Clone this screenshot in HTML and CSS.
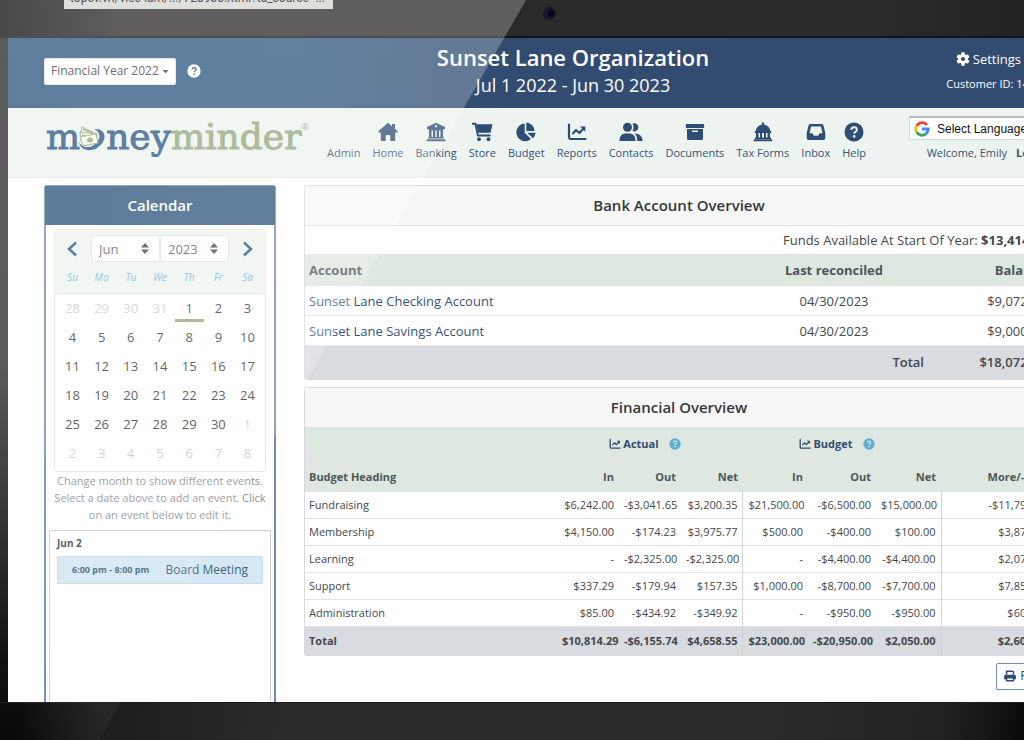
FILE: index.html
```html
<!DOCTYPE html>
<html lang="en">
<head>
<meta charset="utf-8">
<title>MoneyMinder - Sunset Lane Organization</title>
<link rel="stylesheet" href="styles.css">
</head>
<body>
<svg class="sprite" width="0" height="0" aria-hidden="true">
  <symbol id="i-help" viewBox="0 0 20 20"><circle cx="10" cy="10" r="9.5" fill="currentColor"/><path d="M7.2 7.9c.2-1.8 1.4-2.6 2.9-2.6 1.600 0 2.800 1 2.800 2.400 0 2-2.700 2-2.700 4" fill="none" stroke="var(--mark)" stroke-width="1.900"/><circle cx="10.200" cy="14.400" r="1.300" fill="var(--mark)"/></symbol>
  <symbol id="i-chart" viewBox="0 0 20 20"><path d="M2 2.500v12.500q0 2 2 2h14.500" fill="none" stroke="currentColor" stroke-width="2.200" stroke-linecap="round"/><path d="M5.500 12l3.500-4 3.500 3 4.500-5" fill="none" stroke="currentColor" stroke-width="2.100" stroke-linejoin="round"/><path d="M13 4.500h5.300v5.300z" fill="currentColor"/></symbol>
</svg>

<div class="bezel bezel-top"></div>
<div class="screen">
  <header class="topbar">
    <div class="year">
      <span class="pick pick-year"><select aria-label="Financial year"><option>Financial Year 2022</option></select></span>
      <button class="icon-btn" type="button" aria-label="Help with financial years"><svg width="14" height="14"><use href="#i-help"/></svg></button>
    </div>
    <div class="org">
      <h1>Sunset Lane Organization</h1>
      <p>Jul 1 2022 - Jun 30 2023</p>
    </div>
    <div class="account">
      <a class="settings" href="#"><svg width="14" height="14" viewBox="0 0 20 20"><g fill="currentColor"><rect x="7.500" y="0.500" width="5" height="19" rx="1.300"/><rect x="7.500" y="0.500" width="5" height="19" rx="1.300" transform="rotate(60 10 10)"/><rect x="7.500" y="0.500" width="5" height="19" rx="1.300" transform="rotate(120 10 10)"/></g><circle cx="10" cy="10" r="5" fill="none" stroke="currentColor" stroke-width="4"/><circle cx="10" cy="10" r="3" fill="#314c70"/></svg>Settings</a>
      <p>Customer ID: 149345</p>
    </div>
  </header>

  <div class="navbar">
    <a class="logo" href="#" aria-label="moneyminder"><span class="money">m<svg width="29" height="27" viewBox="0 0 29 27"><path d="M16 4C25 3 29 10 25 17 21 24 9 28 3 20c5 4 13 2 17-4 3-5 1-10-4-12z" fill="#2b5684"/><path d="M1 17c1 8 11 11 20 5-8 3-16 2-20-5z" fill="#2b5684"/><g fill="#f3f7ec" stroke="#93a77c" stroke-width="1"><path d="M4 2l15 7-4 8-13-6z"/><path d="M2 7l17 2-1 9-15-2z"/><path d="M2 12l16-3 2 9-15 3z"/></g><ellipse cx="12" cy="15" rx="3" ry="2.500" fill="#93a77c"/><path d="M5 4l9 4M4 10l3 1" stroke="#93a77c" stroke-width="1.500"/></svg>ney</span><span class="minder">minder</span><sup>®</sup></a>
    <nav>
      <a href="#">Admin</a>
      <a href="#"><svg width="20" height="20" viewBox="0 0 20 20" fill="currentColor"><path d="M10 .8l9.600 8.400q.6 1.300-1 1.400H17.200v7.400q0 1-1 1h-3.900v-5q0-1-1-1H8.700q-1 0-1 1v5H3.800q-1 0-1-1v-7.400H1.300Q-.2 10.400.4 9.200z"/><path d="M14 2h3v5l-3-2.500z"/></svg>Home</a>
      <a href="#"><svg width="20" height="20" viewBox="0 0 20 20" fill="currentColor"><path fill-rule="evenodd" d="M10 .8l9 4.200v2.300H1V5zM10 3a1.200 1.200 0 1 0 .1 0z"/><path d="M3 8.200h2.500v7H3zM7 8.200h2.300v7H7zM10.700 8.200H13v7h-2.300zM14.500 8.200H17v7h-2.500zM2.300 15h15.400v1.500H2.300zM.8 17.200h18.400v2H.8zM3 7h14v1.500H3z"/></svg>Banking</a>
      <a href="#"><svg width="21" height="20" viewBox="0 0 21 20"><path d="M.5 1.800h3l2.300 11.700h12" fill="none" stroke="currentColor" stroke-width="1.900" stroke-linecap="round" stroke-linejoin="round"/><path d="M4.500 2.300h16l-2 8.500H6z" fill="currentColor"/><circle cx="7" cy="17.200" r="1.900" fill="currentColor"/><circle cx="16.500" cy="17.200" r="1.900" fill="currentColor"/></svg>Store</a>
      <a href="#"><svg width="20" height="20" viewBox="0 0 20 20" fill="currentColor"><path d="M8.700 1.600v9.200l6.200 6.300A8.800 8.800 0 1 1 8.700 1.600z"/><path d="M10.300.5a9 9 0 0 1 8.300 8.500h-8.300z"/><path d="M11.200 10.700h8.400q-.4 3.200-2.600 5.600z"/></svg>Budget</a>
      <a href="#"><svg width="20" height="20"><use href="#i-chart"/></svg>Reports</a>
      <a href="#"><svg width="24" height="20" viewBox="0 0 24 20" fill="currentColor"><circle cx="8.500" cy="5.300" r="4.500"/><path d="M.5 19q0-7.500 6-7.500h4q6 0 6 7.500z"/><path d="M13.500 1.600a4.100 4.100 0 1 1 0 7.400q2-3.700 0-7.400zM15.500 11.500q8 0 8 7.500h-5.300q.2-5-2.700-7.500z"/></svg>Contacts</a>
      <a href="#"><svg width="20" height="20" viewBox="0 0 20 20" fill="currentColor"><rect x=".8" y="2" width="18.400" height="4" rx=".8"/><path fill-rule="evenodd" d="M2 7h16v9.500q0 1.500-1.500 1.500h-13Q2 18 2 16.500zM7 8.500v1.600h6V8.500z"/></svg>Documents</a>
      <a href="#"><svg width="20" height="20" viewBox="0 0 20 20" fill="currentColor"><path d="M9 .5h2v2q6 1.300 6.200 7H2.800Q3 3.800 9 2.500zM1.800 9h16.400v2H1.800zM3 11h2.500v5H3zM7 11h2v5H7zM11 11h2v5h-2zM14.500 11H17v5h-2.500zM2 15.600h16v1.300H2zM.8 17.300h18.400v2H.8z"/></svg>Tax Forms</a>
      <a href="#"><svg width="20" height="20" viewBox="0 0 20 20" fill="currentColor"><path fill-rule="evenodd" d="M4.500 2h11Q17 2 17.400 3.300L19.300 11v5q0 2-2 2H2.700q-2 0-2-2v-5L2.600 3.300Q3 2 4.500 2zM5 4.400L3.500 11.300h3l1.300 2.500h4.400l1.300-2.500h3L15 4.400z"/></svg>Inbox</a>
      <a href="#"><svg class="mark-light" width="20" height="20"><use href="#i-help"/></svg>Help</a>
    </nav>
    <div class="user">
      <a class="translate" href="#"><svg width="16" height="16" viewBox="0 0 18 18" fill="none" stroke-width="3.200"><path d="M14.700 4.500A7 7 0 0 0 3 5.500" stroke="#ea4335"/><path d="M3 5.500a7 7 0 0 0 0 7" stroke="#fbbc05"/><path d="M3 12.500a7 7 0 0 0 10.500 2" stroke="#34a853"/><path d="M9 9h7q0 3.500-2.500 5.500" stroke="#4285f4"/></svg>Select Language</a>
      <p>Welcome, Emily <a href="#">Logout</a></p>
    </div>
  </div>

  <main>
    <section class="calendar">
      <h2>Calendar</h2>
      <div class="picker">
        <div class="month">
          <button class="icon-btn" type="button" aria-label="Previous month"><svg width="12" height="16" viewBox="0 0 12 16"><path d="M10 1.500L3 8l7 6.500" fill="none" stroke="currentColor" stroke-width="2.500"/></svg></button>
          <div class="month-picks">
            <span class="pick"><select aria-label="Month"><option>Jun</option></select></span>
            <span class="pick"><select aria-label="Year"><option>2023</option></select></span>
          </div>
          <button class="icon-btn" type="button" aria-label="Next month"><svg width="12" height="16" viewBox="0 0 12 16"><path d="M2 1.500L9 8l-7 6.500" fill="none" stroke="currentColor" stroke-width="2.500"/></svg></button>
        </div>
        <table class="days">
          <thead><tr><th>Su</th><th>Mo</th><th>Tu</th><th>We</th><th>Th</th><th>Fr</th><th>Sa</th></tr></thead>
          <tbody>
            <tr><td class="off"><button>28</button></td><td class="off"><button>29</button></td><td class="off"><button>30</button></td><td class="off"><button>31</button></td><td class="today"><button>1</button></td><td><button>2</button></td><td><button>3</button></td></tr>
            <tr><td><button>4</button></td><td><button>5</button></td><td><button>6</button></td><td><button>7</button></td><td><button>8</button></td><td><button>9</button></td><td><button>10</button></td></tr>
            <tr><td><button>11</button></td><td><button>12</button></td><td><button>13</button></td><td><button>14</button></td><td><button>15</button></td><td><button>16</button></td><td><button>17</button></td></tr>
            <tr><td><button>18</button></td><td><button>19</button></td><td><button>20</button></td><td><button>21</button></td><td><button>22</button></td><td><button>23</button></td><td><button>24</button></td></tr>
            <tr><td><button>25</button></td><td><button>26</button></td><td><button>27</button></td><td><button>28</button></td><td><button>29</button></td><td><button>30</button></td><td class="off"><button>1</button></td></tr>
            <tr><td class="off"><button>2</button></td><td class="off"><button>3</button></td><td class="off"><button>4</button></td><td class="off"><button>5</button></td><td class="off"><button>6</button></td><td class="off"><button>7</button></td><td class="off"><button>8</button></td></tr>
          </tbody>
        </table>
      </div>
      <p class="hint">Change month to show different events. Select a date above to add an event. Click on an event below to edit it.</p>
      <div class="events">
        <h3>Jun 2</h3>
        <a class="event" href="#"><strong>6:00 pm - 8:00 pm</strong><span>Board Meeting</span></a>
      </div>
    </section>

    <div class="reports">
      <section class="card">
        <h2>Bank Account Overview</h2>
        <p class="funds">Funds Available At Start Of Year: <strong>$13,414.26</strong></p>
        <table class="bank">
          <colgroup><col><col class="c-date"><col class="c-balance"></colgroup>
          <thead><tr><th>Account</th><th>Last reconciled</th><th>Balance</th></tr></thead>
          <tbody>
            <tr><td><a href="#">Sunset Lane Checking Account</a></td><td>04/30/2023</td><td>$9,072.81</td></tr>
            <tr><td><a href="#">Sunset Lane Savings Account</a></td><td>04/30/2023</td><td>$9,000.00</td></tr>
          </tbody>
          <tfoot><tr><td></td><td>Total</td><td>$18,072.81</td></tr></tfoot>
        </table>
      </section>

      <section class="card">
        <h2>Financial Overview</h2>
        <table class="finance">
          <colgroup><col><col class="c-in"><col class="c-out"><col class="c-net"><col class="c-in2"><col class="c-out2"><col class="c-net2"><col class="c-more"></colgroup>
          <thead>
            <tr class="groups"><th></th>
              <th colspan="3"><span class="group"><a href="#"><svg width="12" height="12"><use href="#i-chart"/></svg>Actual</a><button class="icon-btn" type="button" aria-label="Help with actual"><svg width="12" height="12"><use href="#i-help"/></svg></button></span></th>
              <th colspan="3"><span class="group"><a href="#"><svg width="12" height="12"><use href="#i-chart"/></svg>Budget</a><button class="icon-btn" type="button" aria-label="Help with budget"><svg width="12" height="12"><use href="#i-help"/></svg></button></span></th>
              <th></th></tr>
            <tr class="names"><th>Budget Heading</th><th>In</th><th>Out</th><th>Net</th><th>In</th><th>Out</th><th>Net</th><th>More/-Less</th></tr>
          </thead>
          <tbody>
            <tr><td>Fundraising</td><td>$6,242.00</td><td>-$3,041.65</td><td>$3,200.35</td><td>$21,500.00</td><td>-$6,500.00</td><td>$15,000.00</td><td>-$11,799.65</td></tr>
            <tr><td>Membership</td><td>$4,150.00</td><td>-$174.23</td><td>$3,975.77</td><td>$500.00</td><td>-$400.00</td><td>$100.00</td><td>$3,875.77</td></tr>
            <tr><td>Learning</td><td>-</td><td>-$2,325.00</td><td>-$2,325.00</td><td>-</td><td>-$4,400.00</td><td>-$4,400.00</td><td>$2,075.00</td></tr>
            <tr><td>Support</td><td>$337.29</td><td>-$179.94</td><td>$157.35</td><td>$1,000.00</td><td>-$8,700.00</td><td>-$7,700.00</td><td>$7,857.35</td></tr>
            <tr><td>Administration</td><td>$85.00</td><td>-$434.92</td><td>-$349.92</td><td>-</td><td>-$950.00</td><td>-$950.00</td><td>$600.08</td></tr>
          </tbody>
          <tfoot><tr><td>Total</td><td>$10,814.29</td><td>-$6,155.74</td><td>$4,658.55</td><td>$23,000.00</td><td>-$20,950.00</td><td>$2,050.00</td><td>$2,608.55</td></tr></tfoot>
        </table>
      </section>
      <button class="print" type="button"><svg width="12" height="12" viewBox="0 0 20 20" fill="currentColor"><path d="M3 1h12l2 2v5h-2.500V3.500h-9V8H3z"/><path fill-rule="evenodd" d="M3 8h14q3 0 3 3v4.500h-3V19H3v-3.500H0V11q0-3 3-3zM5.500 14v2.700h9V14z"/></svg>Print</button>
    </div>
  </main>
</div>
<div class="bezel bezel-bottom"></div>

<div class="glare"></div>
<div class="camera"></div>
<div class="status">topcv.vn/viec-lam/.../728930.html?ta_source=...</div>
</body>
</html>
```

FILE: styles.css
```css
:root {
  --navy: #314c70;
  --mint: #dee8e0;
  --pale: #edf4f0;
  --line: #e2e3e5;
  --text: #44474b;
  --mark: #314c70;
}

* { box-sizing: border-box; }

body {
  margin: 0;
  height: 100vh;
  overflow: hidden;
  display: flex;
  flex-direction: column;
  background: linear-gradient(#242424, #2b2b2b 50%, #000 88%);
  color: var(--text);
  font: 13px/18px "Open Sans", "Noto Sans", sans-serif;
}

h1, h2, h3, p { margin: 0; }
a { color: inherit; text-decoration: none; }
button, select { font: inherit; color: inherit; }
svg { display: block; flex: none; }
table { width: 100%; border-collapse: collapse; table-layout: fixed; }

.sprite { position: absolute; }
.icon-btn { display: flex; padding: 0; border: 0; background: none; cursor: pointer; }

/* Device frame */
.bezel { flex: none; }
.bezel-top {
  height: 38px;
  border-bottom: 2px solid #151515;
  background: linear-gradient(90deg, #0c0c0c, #2b2929 12%, #2b2b2b 85%, #222);
}
.bezel-bottom {
  height: 38px;
  border-top: 1px solid #1a1a1a;
  background: linear-gradient(100deg, #020202 2%, #1d1d1d 10%, #2a2a2a 28%, #2a2a2a 75%, #222 92%, #0a0a0a);
}
.screen {
  flex: 1;
  min-height: 0;
  overflow: hidden;
  width: calc(100% + 59px);
  margin-left: 8px;
  display: flex;
  flex-direction: column;
  background: #fff;
}
.glare {
  position: fixed;
  inset: 0;
  pointer-events: none;
  clip-path: polygon(0 0, 526px 0, 99px 100%, 0 100%);
  background: linear-gradient(rgba(255, 255, 255, .25), rgba(255, 255, 255, .24) 45%, rgba(255, 255, 255, .03));
}
.camera {
  position: fixed;
  top: 7px;
  left: 543px;
  width: 13px;
  height: 13px;
  border: 2px solid #171717;
  border-radius: 50%;
  background: radial-gradient(circle at 65% 50%, #0b0318 30%, #2c2490);
}
.status {
  position: fixed;
  top: -11px;
  left: 64px;
  padding: 0 8px 2px 6px;
  background: #dfe0dc;
  color: #555;
  font: 12px/18px "Roboto", sans-serif;
}

/* Header */
.topbar, .navbar { flex: none; padding: 0 37px 0 36px; }
.topbar {
  height: 70px;
  padding-bottom: 4px;
  display: grid;
  grid-template-columns: 232px 1fr 184px;
  align-items: center;
  background: linear-gradient(90deg, #2a547c, #2e5781 25%, #314c70 46%);
  color: #fff;
}
.year { display: flex; align-items: center; gap: 11px; }
.org { text-align: center; }
.org h1 { font-size: 22px; line-height: 28px; font-weight: 600; }
.org p { font-size: 18px; line-height: 28px; }
.account { display: flex; flex-direction: column; align-items: flex-end; gap: 7px; font-size: 11px; }
.settings { display: flex; align-items: center; gap: 3px; padding-right: 33px; font-size: 13px; }

.pick { position: relative; display: block; }
.pick select {
  appearance: none;
  display: block;
  width: 100%;
  height: 27px;
  padding: 0 8px 0 7px;
  border: 1px solid #dfe3e6;
  border-radius: 2px;
  background: #fff;
  color: #5b5f64;
}
.pick::after {
  content: "";
  position: absolute;
  right: 11px;
  top: 8px;
  width: 8px;
  height: 11px;
  background: #44474b;
  clip-path: polygon(50% 0, 100% 42%, 0 42%, 0 58%, 100% 58%, 50% 100%, 0 58%, 0 42%);
  pointer-events: none;
}
.pick-year { width: 132px; }
.pick-year select { padding: 0 6px; color: #3a3d40; font-size: 12px; }
.pick-year::after { right: 7px; top: 12px; width: 7px; height: 4px; clip-path: polygon(0 0, 100% 0, 50% 100%); }

/* Navigation */
.navbar {
  height: 70px;
  display: flex;
  border-bottom: 1px solid #e3ece6;
  background: var(--pale);
  color: #395377;
  font-size: 11px;
}
.logo {
  display: flex;
  align-items: flex-start;
  width: 282px;
  padding: 5px 0 0 2px;
  font: 36px/48px "DejaVu Serif", serif;
}
.logo .money { display: flex; align-items: flex-start; color: #2b5684; -webkit-text-stroke: 1px #2b5684; }
.logo .money svg { margin: 12px -1px 0 -2px; }
.logo .minder { color: #93a77c; -webkit-text-stroke: 1px #93a77c; }
.logo sup { margin-top: 5px; color: #93a77c; font: 9px/18px "Open Sans", sans-serif; }
nav { flex: 1; display: flex; gap: 12px; padding: 0 0 15px 1px; }
nav a { display: flex; flex-direction: column; align-items: center; justify-content: flex-end; gap: 2px; white-space: nowrap; }
nav svg { color: #2e4d74; }
.mark-light { --mark: #edf4f0; }
.user { display: flex; flex-direction: column; align-items: flex-end; gap: 4px; padding-top: 8px; }
.user p a { margin-left: 6px; font-weight: 700; }
.translate {
  display: flex;
  align-items: center;
  gap: 7px;
  width: 145px;
  height: 24px;
  padding-left: 4px;
  border: 1px solid #d5d5d5;
  border-top: 2px solid #bbb;
  background: #fff;
  color: #111;
  font: 12px/18px "Liberation Sans", sans-serif;
  white-space: nowrap;
}

main { flex: 1; min-height: 0; display: flex; gap: 28px; padding: 7px 37px 0 36px; }

/* Calendar */
.calendar {
  flex: none;
  width: 232px;
  display: flex;
  flex-direction: column;
  border: 2px solid #6f8db0;
  border-width: 1px 2px 0;
  border-radius: 3px 3px 0 0;
}
.calendar h2 {
  flex: none;
  height: 39px;
  margin: 0 -1px;
  background: linear-gradient(90deg, #28527b, #31577f);
  color: #fff;
  font-size: 15px;
  line-height: 38px;
  font-weight: 600;
  text-align: center;
}
.picker { flex: none; margin: 4px 8px 0; padding-bottom: 3px; border: 1px solid #e4e9e8; border-radius: 3px; }
.month { display: flex; align-items: center; justify-content: space-between; padding: 5px 11px 0; background: var(--pale); color: #2b5684; }
.month-picks { display: grid; grid-template-columns: 69px 69px; }
.days { color: #393c40; text-align: center; }
.days thead { background: var(--pale); border-bottom: 1px solid #dde4e1; }
.days th { height: 31px; padding: 0; color: #6bb9dc; font-size: 10px; font-weight: 400; font-style: italic; }
.days td { height: 29px; padding: 0; }
.days th:first-child, .days th:last-child { width: 32px; }
.days th:first-child, .days td:first-child { padding-left: 3px; }
.days th:last-child, .days td:last-child { padding-right: 3px; }
.days button { display: block; width: 100%; height: 29px; padding: 0; border: 0; background: none; }
.days .off { color: #c9cdd1; }
.days .today button { height: 28px; padding-top: 2px; border-bottom: 3px solid #93a77c; }
.hint { flex: none; padding: 0 4px; color: #8d9094; font-size: 11px; line-height: 17px; text-align: center; }
.events { flex: 1; margin: 7px 3px 0; padding: 3px 7px; border: 1px solid #cdced0; border-bottom: 0; border-radius: 2px; }
.events h3 { font-size: 10px; line-height: 18px; font-weight: 700; }
.event {
  display: flex;
  align-items: center;
  justify-content: space-between;
  height: 28px;
  margin-top: 4px;
  padding: 0 14px;
  border: 1px solid #c3dcea;
  border-radius: 2px;
  background: #d5e8f4;
  color: #416478;
  font-size: 12px;
}
.event strong { font-size: 9px; }

/* Report cards */
.reports { flex: 1; display: flex; flex-direction: column; gap: 7px; }
.card { flex: none; border: 1px solid #d8d9db; border-radius: 3px; overflow: hidden; }
.card h2 {
  height: 40px;
  border-bottom: 1px solid var(--line);
  background: #f7f7f7;
  color: #34373a;
  font-size: 15px;
  line-height: 39px;
  font-weight: 600;
  text-align: center;
}
.funds { padding: 5px; text-align: right; }
.card th, .card td { padding: 0 5px; text-align: right; white-space: nowrap; }
.card th:first-child, .card td:first-child { padding-left: 4px; text-align: left; }
.card thead { background: var(--mint); color: #4d5659; }
.card tr { border-top: 1px solid var(--line); }
.card tfoot { background: #d8dbe0; font-weight: 600; }

.bank tr { height: 30px; }
.bank thead tr { height: 31px; }
.bank tfoot tr { height: 33px; }
.bank a { color: #395377; }
.bank th:nth-child(2), .bank tbody td:nth-child(2) { text-align: center; }
.bank th:last-child, .bank td:last-child { padding-right: 7px; }
.c-date { width: 190px; }
.c-balance { width: 124px; }

.finance { font-size: 11px; }
.finance tr { height: 27px; }
.finance .groups { height: 35px; border-top: 0; }
.finance .names { height: 29px; }
.finance tfoot tr { height: 28px; }
.finance tfoot { font-weight: 700; }
.finance .groups th { padding-right: 15px; text-align: center; }
.group { display: inline-flex; align-items: center; gap: 10px; color: var(--navy); }
.group a { display: flex; align-items: center; gap: 2px; }
.group .icon-btn { color: #62add6; --mark: #dee8e0; }
.finance tbody td:nth-child(4), .finance tbody td:nth-child(7),
.finance tfoot td:nth-child(4), .finance tfoot td:nth-child(7) { border-right: 1px solid #d3d4d6; }
.c-in { width: 62px; }
.c-out { width: 62px; }
.c-net { width: 62px; }
.c-in2 { width: 65px; }
.c-out2 { width: 68px; }
.c-net2 { width: 65px; }
.c-more { width: 112px; }

.print {
  align-self: flex-end;
  display: flex;
  align-items: center;
  gap: 4px;
  height: 27px;
  padding: 0 6px 0 7px;
  border: 1px solid #6f8db0;
  border-radius: 2px;
  background: #fff;
  color: var(--navy);
  font-size: 12px;
}
```
